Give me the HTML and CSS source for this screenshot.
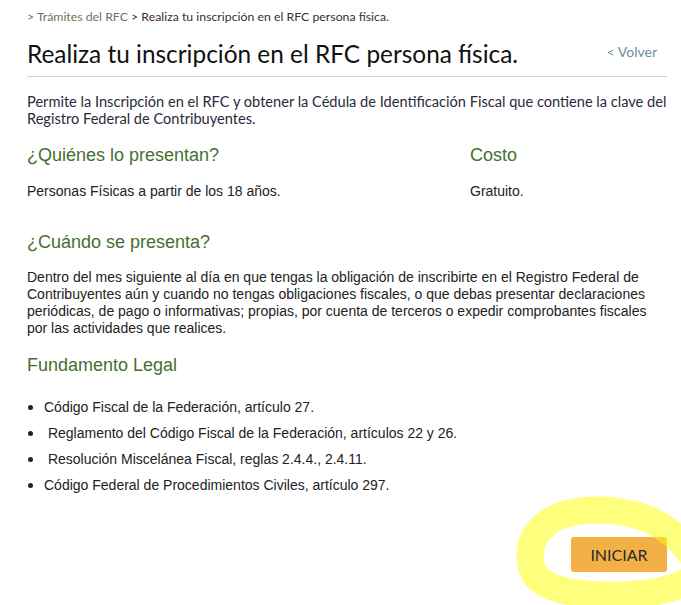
FILE: index.html
```html
<!DOCTYPE html>
<html lang="es">
<head>
<meta charset="utf-8">
<title>Realiza tu inscripción en el RFC persona física</title>
<link rel="stylesheet" href="styles.css">
</head>
<body>
<div class="page">
  <nav class="crumbs"><span class="crumb-link">&gt; Trámites del RFC</span> <span class="crumb-current">&gt; Realiza tu inscripción en el RFC persona física.</span></nav>
  <header class="title-row">
    <h1 class="title">Realiza tu inscripción en el RFC persona física.</h1>
    <a class="back">&lt; Volver</a>
  </header>
  <p class="intro">Permite la Inscripción en el RFC y obtener la Cédula de Identificación Fiscal que contiene la clave del Registro Federal de Contribuyentes.</p>
  <div class="cols">
    <div class="col">
      <h2 class="sec">¿Quiénes lo presentan?</h2>
      <p class="txt">Personas Físicas a partir de los 18 años.</p>
    </div>
    <div class="col">
      <h2 class="sec">Costo</h2>
      <p class="txt">Gratuito.</p>
    </div>
  </div>
  <h2 class="sec sec-gap">¿Cuándo se presenta?</h2>
  <p class="txt">Dentro del mes siguiente al día en que tengas la obligación de inscribirte en el Registro Federal de Contribuyentes aún y cuando no tengas obligaciones fiscales, o que debas presentar declaraciones periódicas, de pago o informativas; propias, por cuenta de terceros o expedir comprobantes fiscales por las actividades que realices.</p>
  <h2 class="sec">Fundamento Legal</h2>
  <ul class="laws">
    <li>Código Fiscal de la Federación, artículo 27.</li>
    <li>&nbsp;Reglamento del Código Fiscal de la Federación, artículos 22 y 26.</li>
    <li>&nbsp;Resolución Miscelánea Fiscal, reglas 2.4.4., 2.4.11.</li>
    <li>Código Federal de Procedimientos Civiles, artículo 297.</li>
  </ul>
  <div class="actions">
    <button class="start">INICIAR</button>
  </div>
</div>
<svg class="highlight" width="681" height="605" viewBox="0 0 681 605" aria-hidden="true">
  <path d="M 698 566 C 678 528 642 510 597 510 C 552 510 530 530 530 557 C 530 587 563 595 612 595 C 652 595 678 589 698 575" fill="none" stroke="#ffff00" stroke-width="27" stroke-linecap="round"/>
</svg>
</body>
</html>
```

FILE: styles.css
```css
html, body {
  margin: 0;
  padding: 0;
  background: #ffffff;
}

.page {
  width: 640px;
  padding: 7px 0 0 27px;
  font-family: "Liberation Sans", Arial, sans-serif;
  color: #222;
}

.crumbs {
  font-family: Lato, "Open Sans", sans-serif;
  font-size: 12.3px;
  line-height: 20px;
}

.crumb-link {
  color: #5f7a58;
}

.crumb-current {
  color: #3a2c38;
}

.title-row {
  display: flex;
  justify-content: space-between;
  align-items: center;
  margin-top: 11px;
  padding-bottom: 6px;
  border-bottom: 1px solid #d2d2d2;
}

.title {
  margin: 0;
  font-family: Lato, "Open Sans", sans-serif;
  font-weight: 400;
  font-size: 24.4px;
  line-height: 32px;
  color: #111;
}

.back {
  font-family: Lato, "Open Sans", sans-serif;
  font-size: 14px;
  line-height: 20px;
  color: #6a8e9e;
  padding-right: 10px;
  margin-top: -4px;
}

.intro {
  margin: 16px 0 0;
  font-family: Lato, "Open Sans", sans-serif;
  font-size: 14.6px;
  line-height: 17px;
  color: #2a2a3a;
}

.cols {
  display: grid;
  grid-template-columns: 443px 1fr;
}

.sec {
  margin: 17px 0 0;
  font-family: "Liberation Sans", Arial, sans-serif;
  font-weight: 400;
  font-size: 18px;
  line-height: 22px;
  color: #44702e;
}

.sec-gap {
  margin-top: 31px;
}

.txt {
  margin: 16px 0 0;
  font-size: 14px;
  line-height: 17px;
  color: #222;
}

.cols .txt {
  margin-top: 17px;
}

.laws {
  list-style: none;
  margin: 23px 0 0;
  padding: 0;
  font-size: 14px;
  line-height: 17px;
}

.laws li {
  margin-bottom: 9px;
}

.laws li::before {
  content: "";
  display: inline-block;
  width: 5px;
  height: 5px;
  border-radius: 50%;
  background: #222;
  margin: 0 11px 0 1px;
  vertical-align: 2px;
}

.actions {
  display: flex;
  justify-content: flex-end;
  margin-top: 43px;
}

.start {
  width: 96px;
  height: 35px;
  border: none;
  border-radius: 3px;
  background: #f2b047;
  color: #2a2a2a;
  font-family: Lato, "Open Sans", sans-serif;
  font-size: 16px;
  padding: 0;
}

.highlight {
  position: absolute;
  left: 0;
  top: 0;
  opacity: 0.5;
  pointer-events: none;
}
```
